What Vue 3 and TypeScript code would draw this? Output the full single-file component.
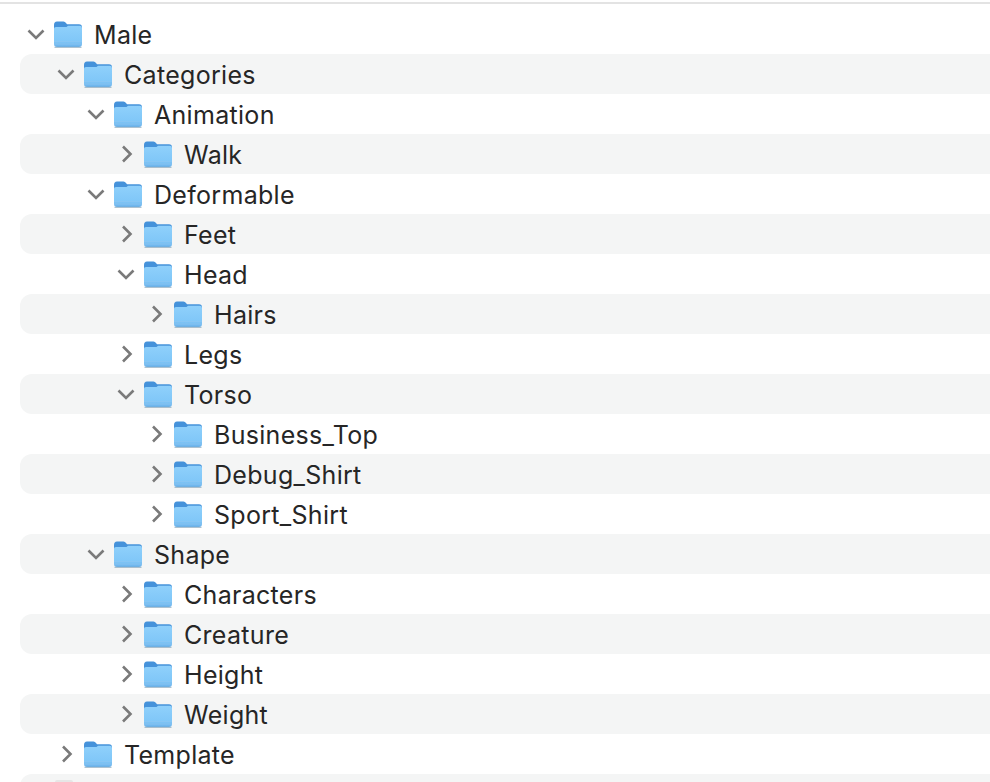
<script setup lang="ts">
interface Row { name: string; depth: number; open: boolean }
const rows: Row[] = [
  { name: 'Male', depth: 0, open: true },
  { name: 'Categories', depth: 1, open: true },
  { name: 'Animation', depth: 2, open: true },
  { name: 'Walk', depth: 3, open: false },
  { name: 'Deformable', depth: 2, open: true },
  { name: 'Feet', depth: 3, open: false },
  { name: 'Head', depth: 3, open: true },
  { name: 'Hairs', depth: 4, open: false },
  { name: 'Legs', depth: 3, open: false },
  { name: 'Torso', depth: 3, open: true },
  { name: 'Business_Top', depth: 4, open: false },
  { name: 'Debug_Shirt', depth: 4, open: false },
  { name: 'Sport_Shirt', depth: 4, open: false },
  { name: 'Shape', depth: 2, open: true },
  { name: 'Characters', depth: 3, open: false },
  { name: 'Creature', depth: 3, open: false },
  { name: 'Height', depth: 3, open: false },
  { name: 'Weight', depth: 3, open: false },
  { name: 'Template', depth: 1, open: false },
]
</script>

<template>
  <div class="window">
    <div class="topline"></div>
    <ul class="tree">
      <li v-for="(row, i) in rows" :key="row.name" class="row" :class="{ striped: i % 2 === 1 }"
          :style="{ paddingLeft: 6 + row.depth * 30 + 'px' }">
        <svg class="chev" viewBox="0 0 20 20" width="20" height="20">
          <path v-if="row.open" d="M2.5 6.5 L10 14 L17.5 6.5" />
          <path v-else d="M7 2.5 L14.5 10 L7 17.5" />
        </svg>
        <svg class="folder" viewBox="0 0 30 28" width="30" height="28">
          <defs>
            <linearGradient :id="'body' + i" x1="0" y1="0" x2="0" y2="1">
              <stop offset="0" stop-color="#8fd0fb" />
              <stop offset="0.72" stop-color="#80c7f8" />
              <stop offset="1" stop-color="#6bb2ea" />
            </linearGradient>
          </defs>
          <path d="M1 5 Q1 1.5 4 1.5 H10.5 Q12 1.5 13 3 L14 4.2 H26 Q29 4.2 29 7.5 V12 H1 Z" fill="#4592da" />
          <path d="M1 8.5 Q1 7 3 7 L13.5 7 L15 5.8 H27 Q29 5.8 29 8 V24 Q29 27 26 27 H4 Q1 27 1 24 Z" :fill="'url(#body' + i + ')'" />
          <path d="M1 21.5 H29 M1 24 H29" stroke="#8cc6f2" stroke-width="0.7" fill="none" />
          <path d="M1.5 27.3 H28.5" stroke="#7f9fb8" stroke-width="0.8" fill="none" />
        </svg>
        <span class="label">{{ row.name }}</span>
      </li>
      <li class="row striped peek"><span class="doc"></span></li>
    </ul>
  </div>
</template>

<style>
html, body { margin: 0; background: #fff; overflow: hidden; }
</style>

<style scoped>
.window {
  width: 990px;
  height: 782px;
  overflow: hidden;
  background: #fff;
  font-family: Inter, "Liberation Sans", sans-serif;
}
.topline {
  height: 2px;
  margin-top: 2px;
  background: #e3e3e3;
}
.tree {
  list-style: none;
  margin: 10px 0 0 20px;
  padding: 0;
}
.row {
  height: 40px;
  box-sizing: border-box;
  display: flex;
  align-items: center;
  border-radius: 12px 0 0 12px;
}
.striped { background: #f4f5f5; }
.peek { padding-left: 35px; }
.doc {
  width: 18px;
  height: 28px;
  background: #e6e6e6;
  border-radius: 2px;
}
.chev {
  flex: none;
  width: 20px;
  height: 20px;
  fill: none;
  stroke: #7a7a7a;
  stroke-width: 2.6;
}
.folder { flex: none; margin-left: 7px; }
.label {
  margin-left: 11px;
  padding-top: 2px;
  font-size: 25px;
  letter-spacing: 0.3px;
  color: #262626;
  white-space: nowrap;
}
</style>
